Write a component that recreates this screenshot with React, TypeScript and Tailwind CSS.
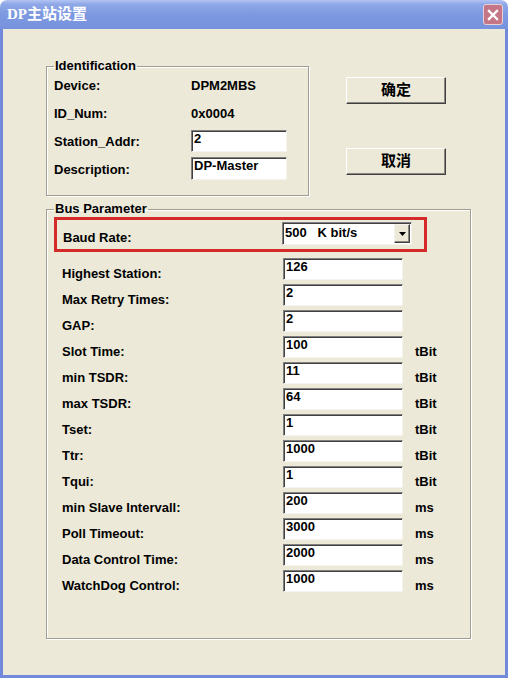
import { useState } from "react"

interface ParamRow {
  label: string
  value: string
  unit?: string
}

const busRows: ParamRow[] = [
  { label: "Highest Station:", value: "126" },
  { label: "Max Retry Times:", value: "2" },
  { label: "GAP:", value: "2" },
  { label: "Slot Time:", value: "100", unit: "tBit" },
  { label: "min TSDR:", value: "11", unit: "tBit" },
  { label: "max TSDR:", value: "64", unit: "tBit" },
  { label: "Tset:", value: "1", unit: "tBit" },
  { label: "Ttr:", value: "1000", unit: "tBit" },
  { label: "Tqui:", value: "1", unit: "tBit" },
  { label: "min Slave Intervall:", value: "200", unit: "ms" },
  { label: "Poll Timeout:", value: "3000", unit: "ms" },
  { label: "Data Control Time:", value: "2000", unit: "ms" },
  { label: "WatchDog Control:", value: "1000", unit: "ms" },
]

// classic sunken edit box
function Field({ value, className = "" }: { value: string; className?: string }) {
  return (
    <div
      className={`bg-white border border-t-[#808080] border-l-[#808080] border-r-[#f4f3ee] border-b-[#f4f3ee] shadow-[inset_1px_1px_0_#404040] pl-[2px] text-[13px] font-bold leading-[16px] text-black ${className}`}
    >
      {value}
    </div>
  )
}

function DialogButton({ label }: { label: string }) {
  return (
    <button className="w-[100px] h-[27px] bg-[#ece9d8] border border-t-white border-l-white border-r-[#404040] border-b-[#404040] shadow-[inset_-1px_-1px_0_#8a887e] text-[15px] font-bold text-black font-['Liberation_Sans','Noto_Sans_CJK_SC',sans-serif]">
      {label}
    </button>
  )
}

export default function App() {
  const [baud] = useState("500   K bit/s")

  return (
    <div className="w-[508px] h-[678px] flex flex-col font-['Liberation_Sans',Arial,sans-serif] text-black select-none">
      {/* Title bar */}
      <div className="h-[29px] shrink-0 rounded-t-[7px] bg-[linear-gradient(180deg,#b3c4f3_0%,#8ea7e7_15%,#7d99e0_50%,#7692de_100%)] flex items-center pl-[7px] pr-[5px]">
        <span className="text-[15px] font-bold text-white font-['Liberation_Serif','Noto_Sans_CJK_SC',serif]">
          DP主站设置
        </span>
        <div className="ml-auto w-[20px] h-[21px] rounded-[3px] bg-[#c47586] border border-[#e8d0d8] flex items-center justify-center">
          <svg width="12" height="12" viewBox="0 0 12 12">
            <path d="M2 2 L10 10 M10 2 L2 10" stroke="#ffffff" strokeWidth="2.4" strokeLinecap="square" />
          </svg>
        </div>
      </div>

      {/* Body */}
      <div className="flex-1 bg-[#ece9d8] border-l-[3px] border-r-[3px] border-b-[3px] border-[#7189db] pl-[43px] pt-[29px]">
        <div className="flex items-start">
          <fieldset className="w-[263px] border border-[#a09e92] shadow-[1px_1px_0_#ffffff,inset_1px_1px_0_#ffffff] px-[7px] pb-[11px]">
            <legend className="px-[1px] text-[13px] font-bold leading-[16px]">Identification</legend>
            <div className="-mt-[2px] grid grid-cols-[137px_96px] auto-rows-[28px] items-center text-[13px] font-bold">
              <span>Device:</span>
              <span>DPM2MBS</span>
              <span>ID_Num:</span>
              <span>0x0004</span>
              <span>Station_Addr:</span>
              <Field value="2" className="h-[22px] -mt-[2px]" />
              <span>Description:</span>
              <Field value="DP-Master" className="h-[23px] -mt-[3px]" />
            </div>
          </fieldset>

          <div className="ml-[37px] mt-[19px] flex flex-col gap-[44px]">
            <DialogButton label="确定" />
            <DialogButton label="取消" />
          </div>
        </div>

        <fieldset className="mt-[5px] w-[425px] border border-[#a09e92] shadow-[1px_1px_0_#ffffff,inset_1px_1px_0_#ffffff] px-[7px] pb-[46px]">
          <legend className="px-[1px] text-[13px] font-bold leading-[16px]">Bus Parameter</legend>

          {/* Baud rate, outlined in red */}
          <div className="w-[373px] h-[35px] border-[3px] border-[#d42a2a] flex items-start pl-[6px] pr-[12px]">
            <span className="mt-[10px] text-[13px] font-bold leading-[16px]">Baud Rate:</span>
            <div className="ml-auto mt-[2px] w-[130px] h-[23px] bg-white border border-t-[#808080] border-l-[#808080] border-r-[#f4f3ee] border-b-[#f4f3ee] shadow-[inset_1px_1px_0_#404040] flex items-start pt-[1px] pl-[2px] pr-[1px]">
              <span className="flex-1 whitespace-pre text-[13px] font-bold leading-[16px] pt-[1px]">{baud}</span>
              <div className="w-[16px] h-[19px] bg-[#ece9d8] border border-t-[#f4f3ee] border-l-[#f4f3ee] border-r-[#404040] border-b-[#404040] shadow-[inset_-1px_-1px_0_#8a887e] flex items-center justify-center">
                <svg width="7" height="4" viewBox="0 0 7 4">
                  <path d="M0 0 H7 L3.5 4 Z" fill="#000000" />
                </svg>
              </div>
            </div>
          </div>

          <div className="mt-[6px] pl-[8px] grid grid-cols-[221px_120px_1fr] auto-rows-[22px] gap-y-[4px] items-start text-[13px] font-bold leading-[16px]">
            {busRows.map((row) => (
              <div key={row.label} className="contents">
                <span className="mt-[8px] whitespace-nowrap">{row.label}</span>
                <Field value={row.value} className="h-[22px]" />
                <span className="mt-[8px] pl-[12px]">{row.unit ?? ""}</span>
              </div>
            ))}
          </div>
        </fieldset>
      </div>
    </div>
  )
}
